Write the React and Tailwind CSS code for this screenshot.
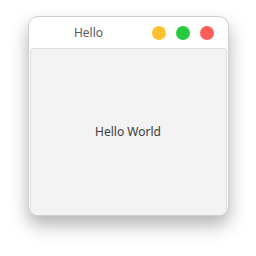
import React from 'react';

const App = () => {
  return (
    <div className="w-[256px] h-[256px] bg-white flex justify-center pt-[16px]" style={{ fontFamily: '"Noto Sans", "Open Sans", sans-serif' }}>
      <div className="w-[201px] h-[200px] rounded-[10px] bg-white border border-[#cfcfcf] shadow-[0_9px_18px_rgba(0,0,0,0.3)] flex flex-col overflow-hidden">
        {/* Title bar */}
        <div className="h-[31px] flex items-center pr-[14px] shrink-0">
          <div className="flex-1 text-center text-[12px] text-[#5a5a5a] pr-[3px]">Hello</div>
          <div className="flex items-center gap-[10px]">
            <span className="w-[14px] h-[14px] rounded-full bg-[#fdc12d]" />
            <span className="w-[14px] h-[14px] rounded-full bg-[#27cb3f]" />
            <span className="w-[14px] h-[14px] rounded-full bg-[#fe5e57]" />
          </div>
        </div>
        {/* Content */}
        <div className="flex-1 mx-px bg-[#f3f3f3] border-x border-t border-[#dedede] rounded-t-[4px] flex items-center justify-center">
          <span className="text-[12px] text-[#3c3c3c]">Hello World</span>
        </div>
      </div>
    </div>
  );
};

export default App;
